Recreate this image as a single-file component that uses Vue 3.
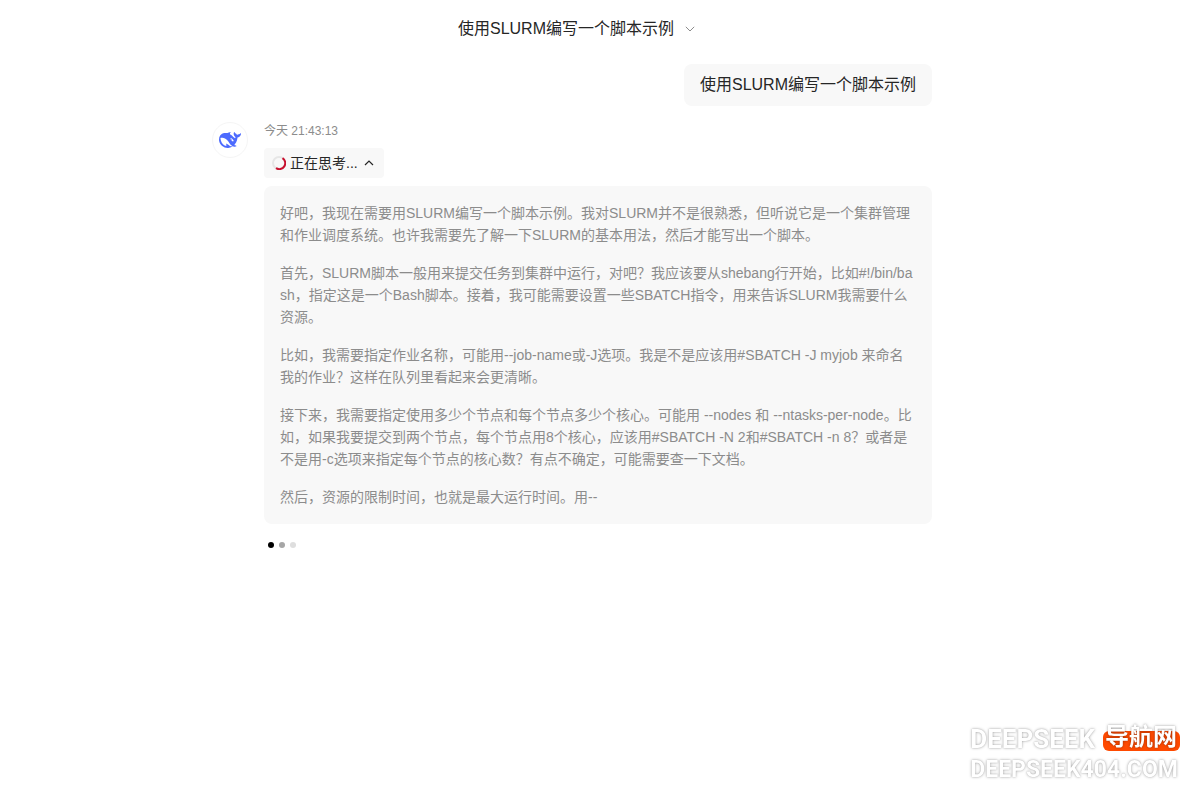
<script setup>
import { ref } from 'vue'

const title = '使用SLURM编写一个脚本示例'
const open = ref(true)
const thoughts = [
  '好吧，我现在需要用SLURM编写一个脚本示例。我对SLURM并不是很熟悉，但听说它是一个集群管理和作业调度系统。也许我需要先了解一下SLURM的基本用法，然后才能写出一个脚本。',
  '首先，SLURM脚本一般用来提交任务到集群中运行，对吧？我应该要从shebang行开始，比如#!/bin/bash，指定这是一个Bash脚本。接着，我可能需要设置一些SBATCH指令，用来告诉SLURM我需要什么资源。',
  '比如，我需要指定作业名称，可能用--job-name或-J选项。我是不是应该用#SBATCH -J myjob 来命名我的作业？这样在队列里看起来会更清晰。',
  '接下来，我需要指定使用多少个节点和每个节点多少个核心。可能用 --nodes 和 --ntasks-per-node。比如，如果我要提交到两个节点，每个节点用8个核心，应该用#SBATCH -N 2和#SBATCH -n 8？或者是不是用-c选项来指定每个节点的核心数？有点不确定，可能需要查一下文档。',
  '然后，资源的限制时间，也就是最大运行时间。用--'
]
</script>

<template>
  <div class="page">
    <header class="topbar">
      <button class="title" type="button">
        <span>{{ title }}</span>
        <svg width="10" height="6" viewBox="0 0 10 6" fill="none" stroke="#8c8c8c" aria-hidden="true">
          <path d="M.8.8 5 5 9.2.8" />
        </svg>
      </button>
    </header>

    <main class="chat">
      <div class="question">{{ title }}</div>

      <article class="answer">
        <div class="avatar">
          <svg width="22" height="22" viewBox="0 0 24 24" aria-hidden="true">
            <path
              fill="#4d6bfe"
              d="M23.748 4.651c-.254-.124-.364.113-.512.233-.051.04-.094.09-.137.137-.372.397-.806.657-1.373.626-.829-.046-1.537.214-2.163.848-.133-.782-.575-1.248-1.247-1.548-.352-.155-.708-.311-.955-.65-.172-.24-.219-.509-.305-.774-.055-.16-.11-.323-.293-.35-.2-.031-.278.136-.356.276-.313.572-.434 1.202-.422 1.84.027 1.436.633 2.58 1.838 3.393.137.094.172.187.129.323-.082.28-.18.553-.266.833-.055.179-.137.218-.328.14a5.5 5.5 0 0 1-1.737-1.179c-.857-.828-1.631-1.743-2.597-2.46a12 12 0 0 0-.689-.47c-.985-.957.13-1.743.387-1.836.27-.098.094-.433-.778-.428-.872.003-1.67.295-2.687.685a3 3 0 0 1-.465.136 9.6 9.6 0 0 0-2.883-.101c-1.885.21-3.39 1.1-4.497 2.622C.082 8.776-.231 10.854.152 13.02c.403 2.284 1.568 4.175 3.36 5.653 1.857 1.533 3.997 2.284 6.438 2.14 1.482-.085 3.132-.284 4.994-1.86.47.234.962.328 1.78.398.629.058 1.235-.031 1.705-.129.735-.155.684-.836.418-.961-2.155-1.004-1.682-.595-2.112-.926 1.095-1.295 2.768-3.598 3.285-6.733.05-.346.115-.834.108-1.114-.004-.171.035-.238.23-.257a4.2 4.2 0 0 0 1.545-.475c1.397-.763 1.96-2.016 2.093-3.517.02-.23-.004-.467-.247-.588M11.58 18.168c-2.088-1.642-3.101-2.183-3.52-2.16-.39.024-.32.472-.234.763.09.288.207.487.371.74.114.167.192.416-.113.603-.673.416-1.842-.14-1.897-.168-1.361-.801-2.5-1.86-3.301-3.306-.775-1.393-1.225-2.888-1.299-4.482-.02-.385.094-.522.477-.592a4.7 4.7 0 0 1 1.53-.038c2.131.311 3.946 1.264 5.467 2.774.868.86 1.525 1.887 2.202 2.89.72 1.066 1.494 2.082 2.48 2.915.348.291.626.513.892.677-.802.09-2.14.109-3.055-.616m1.001-6.44a.306.306 0 0 1 .415-.287.3.3 0 0 1 .113.074.3.3 0 0 1 .086.214c0 .17-.136.307-.308.307a.303.303 0 0 1-.306-.307m3.11 1.596c-.2.081-.4.151-.591.16a1.25 1.25 0 0 1-.798-.254c-.274-.23-.47-.358-.551-.758a1.7 1.7 0 0 1 .015-.588c.07-.327-.007-.537-.238-.727-.188-.156-.426-.199-.689-.199a.6.6 0 0 1-.254-.078.253.253 0 0 1-.114-.358 1 1 0 0 1 .192-.21c.356-.202.767-.136 1.146.016.352.144.618.408 1.001.782.392.451.462.576.685.915.176.264.336.536.446.848.066.194-.02.353-.25.45"
            />
          </svg>
        </div>
        <div class="body">
          <time class="time">今天 21:43:13</time>
          <button class="thinking" type="button" :aria-expanded="open" @click="open = !open">
            <svg width="14" height="14" viewBox="0 0 14 14" fill="none" stroke-width="2" aria-hidden="true">
              <circle cx="7" cy="7" r="6" stroke="#e6e6e6" />
              <path d="M10.500 2.100A6 6 0 0 1 4 12.200" stroke="#c8102e" />
            </svg>
            <span>正在思考...</span>
            <svg class="caret" width="10" height="6" viewBox="0 0 10 6" fill="none" stroke="#262626" stroke-width="1.200" aria-hidden="true">
              <path d="M1 5 5 1l4 4" />
            </svg>
          </button>
          <section v-if="open" class="thoughts">
            <p v-for="(text, i) in thoughts" :key="i">{{ text }}</p>
          </section>
          <div class="dots" role="status" aria-label="正在输入"><i></i><i></i><i></i></div>
        </div>
      </article>
    </main>

    <aside class="mark">
      <div class="brand"><span>DEEPSEEK</span><span class="tag">导航网</span></div>
      <div class="domain">DEEPSEEK404.COM</div>
    </aside>
  </div>
</template>

<style>
body {
  margin: 0;
  background: #fff;
}
</style>

<style scoped>
.page {
  min-height: 100vh;
  color: #262626;
  font-family: "Liberation Sans", "Noto Sans CJK SC", sans-serif;
}
button {
  border: 0;
  padding: 0;
  color: inherit;
  font-family: inherit;
  cursor: pointer;
}
.topbar {
  display: flex;
  justify-content: center;
  padding: 17px 47px 23px 0;
}
.title {
  display: flex;
  align-items: center;
  gap: 11px;
  background: none;
  font-size: 16px;
  line-height: 24px;
}
.chat {
  display: flex;
  flex-direction: column;
  max-width: 720px;
  margin: 0 auto;
  padding: 0 56px 0 0;
}
.question {
  align-self: flex-end;
  padding: 9px 16px;
  border-radius: 8px;
  background: #f8f8f8;
  font-size: 16px;
  line-height: 24px;
}
.answer {
  display: flex;
  gap: 16px;
  margin-top: 16px;
}
.avatar {
  display: flex;
  flex: none;
  align-items: center;
  justify-content: center;
  box-sizing: border-box;
  width: 36px;
  height: 36px;
  border: 1px solid #f5f5f5;
  border-radius: 50%;
}
.body {
  flex: 1;
  min-width: 0;
}
.time {
  display: block;
  margin-bottom: 8px;
  color: #8c8c8c;
  font-size: 12px;
  line-height: 18px;
}
.thinking {
  display: flex;
  align-items: center;
  gap: 4px;
  padding: 4px 10px 4px 8px;
  border-radius: 4px;
  background: #f8f8f8;
  font-size: 14px;
  line-height: 22px;
}
.caret {
  margin-left: 2px;
}
.thoughts {
  display: flex;
  flex-direction: column;
  gap: 16px;
  margin-top: 8px;
  padding: 16px;
  border-radius: 8px;
  background: #f8f8f8;
  color: #8c8c8c;
  font-size: 14px;
  line-height: 22px;
  word-break: break-all;
}
.thoughts p {
  margin: 0;
}
.dots {
  display: flex;
  gap: 5px;
  padding: 18px 4px;
}
.dots i {
  width: 6px;
  height: 6px;
  border-radius: 50%;
  background: #000;
}
.dots i:nth-child(2) {
  background: #a6a6a6;
}
.dots i:nth-child(3) {
  background: #dedede;
}
.mark {
  position: fixed;
  right: 20px;
  bottom: 15px;
  color: #fff;
  font-family: Roboto, "Noto Sans CJK SC", sans-serif;
  font-weight: 700;
  text-shadow: 0 0 3px rgba(0, 0, 0, 0.35), 0 0 1px rgba(0, 0, 0, 0.2);
}
.brand {
  display: flex;
  gap: 8px;
  font-size: 26px;
  line-height: 32px;
}
.tag {
  position: relative;
  z-index: 0;
  padding: 0 3px 0 2px;
  font-size: 24px;
  line-height: 28px;
}
.tag::before {
  content: "";
  position: absolute;
  inset: 8px 0 4px;
  z-index: -1;
  border-radius: 6px;
  background: #ff4a00;
}
.domain {
  font-size: 23px;
  line-height: 30px;
}
</style>
